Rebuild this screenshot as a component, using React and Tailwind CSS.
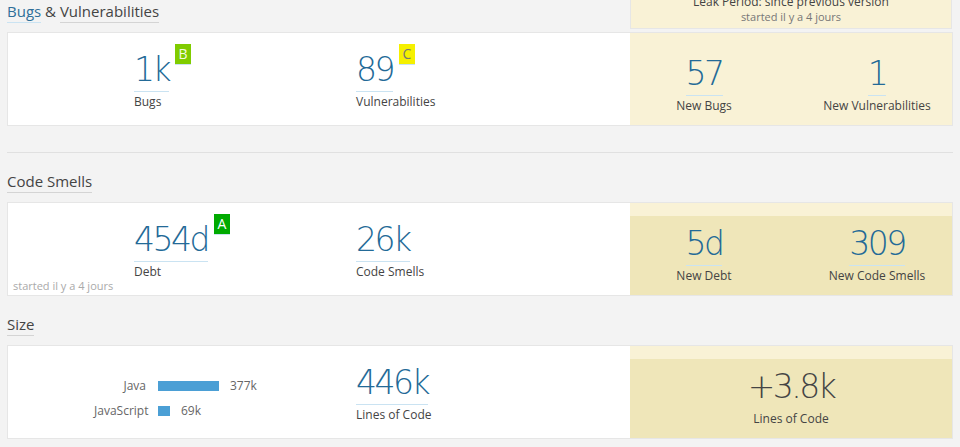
const FONT = { fontFamily: '"Open Sans", "Noto Sans", sans-serif' };
const NUM_FONT = { fontFamily: '"DejaVu Sans", "Open Sans", sans-serif' };

const RATING = {
  A: 'bg-[#00aa00] text-white',
  B: 'bg-[#80cc00] text-[#f4fbe0]',
  C: 'bg-[#f5f000] text-[#777]',
};

function Heading({ children }) {
  return <div className="text-[15px] leading-[20px] text-[#444]">{children}</div>;
}

function Link({ children, blue, line = 'border-[#d4d4d4]' }) {
  return (
    <span className={`inline-block pb-[1px] border-b ${line} ${blue ? 'text-[#2f6f99]' : ''}`}>{children}</span>
  );
}

function Badge({ r }) {
  return (
    <span className={`ml-[6px] w-4 h-[21px] border-b border-[#cae3f2] text-[14px] leading-[20px] text-center ${RATING[r]}`}>
      {r}
    </span>
  );
}

function Measure({ value, label, rating, center, plain }) {
  return (
    <div className={`flex flex-col ${center ? 'items-center' : 'items-start'}`}>
      <div className="flex items-start">
        <span
          style={NUM_FONT}
          className={`inline-block mt-[6px] pb-[1px] border-b text-[33px] leading-[40px] font-extralight tracking-[-2.5px] ${
            plain ? 'border-transparent text-[#444]' : 'border-[#cae3f2] text-[#236a97]'
          }`}
        >
          {value}
        </span>
        {rating && <Badge r={rating} />}
      </div>
      <span className="text-[12px] leading-[20px] text-[#444]">{label}</span>
    </div>
  );
}

function Card({ left, leak, dark }) {
  return (
    <div className="flex h-[94px] border border-[#e6e6e6] bg-white">
      <div className="flex flex-1">{left}</div>
      <div className={`w-[322px] flex flex-col ${dark ? 'bg-[#efe6b9]' : 'bg-[#f9f2d6]'}`}>
        {dark && <div className="h-[13px] bg-[#f9f2d6]" />}
        {leak}
      </div>
    </div>
  );
}

function LeakPair({ a, b, dark }) {
  return (
    <div className={`flex ${dark ? 'pt-[2px]' : 'pt-[15px]'}`}>
      <div className="w-[148px]">
        <Measure center {...a} />
      </div>
      <div className="ml-[24px] w-[150px]">
        <Measure center {...b} />
      </div>
    </div>
  );
}

const LANGS = [
  { name: 'Java', w: 61, v: '377k' },
  { name: 'JavaScript', w: 12, v: '69k' },
];

export default function App() {
  return (
    <div className="min-h-screen bg-[#f3f3f3] px-[7px] overflow-hidden" style={FONT}>
      {/* bugs & vulnerabilities */}
      <div className="flex items-start justify-between mt-[-5px]">
        <div className="mt-[6px]">
          <Heading>
            <Link blue line="border-[#cae3f2]">Bugs</Link> &amp; <Link>Vulnerabilities</Link>
          </Heading>
        </div>
        <div className="w-[322px] mr-[1px] border-x border-b border-[#e6e6e6] bg-[#f9f2d6] pb-[3px] text-center">
          <div className="text-[12px] leading-[14px] text-[#444]">Leak Period: since previous version</div>
          <div className="text-[11px] leading-[16px] text-[#777]">started il y a 4 jours</div>
        </div>
      </div>
      <div className="mt-[3px]">
        <Card
          left={
            <>
              <div className="w-[126px]" />
              <div className="w-[222px] pt-[11px]">
                <Measure value="1k" label="Bugs" rating="B" />
              </div>
              <div className="flex-1 pt-[11px]">
                <Measure value="89" label="Vulnerabilities" rating="C" />
              </div>
            </>
          }
          leak={<LeakPair a={{ value: '57', label: 'New Bugs' }} b={{ value: '1', label: 'New Vulnerabilities' }} />}
        />
      </div>

      <div className="mt-[26px] h-px bg-[#e0e0e0]" />

      {/* code smells */}
      <div className="mt-[18px]">
        <Heading>
          <Link>Code Smells</Link>
        </Heading>
      </div>
      <div className="mt-[9px]">
        <Card
          dark
          left={
            <>
              <div className="w-[126px] flex flex-col justify-end pl-[5px] pb-[1px]">
                <span className="text-[11px] leading-[16px] text-[#aaa] whitespace-nowrap">started il y a 4 jours</span>
              </div>
              <div className="w-[222px] pt-[11px]">
                <Measure value="454d" label="Debt" rating="A" />
              </div>
              <div className="flex-1 pt-[11px]">
                <Measure value="26k" label="Code Smells" />
              </div>
            </>
          }
          leak={
            <LeakPair dark a={{ value: '5d', label: 'New Debt' }} b={{ value: '309', label: 'New Code Smells' }} />
          }
        />
      </div>

      {/* size */}
      <div className="mt-[18px]">
        <Heading>
          <Link>Size</Link>
        </Heading>
      </div>
      <div className="mt-[9px]">
        <Card
          dark
          left={
            <>
              <div className="w-[348px] pl-[86px] pt-[27px]">
                {LANGS.map((l) => (
                  <div key={l.name} className="flex items-center h-[25px] text-[12px] text-[#666]">
                    <span className="w-[52px] text-right">{l.name}</span>
                    <span className="ml-[12px] h-[10px] bg-[#4b9fd5]" style={{ width: l.w }} />
                    <span className="ml-[11px]">{l.v}</span>
                  </div>
                ))}
              </div>
              <div className="flex-1 pt-[11px]">
                <Measure value="446k" label="Lines of Code" />
              </div>
            </>
          }
          leak={
            <div className="pt-[2px]">
              <Measure center plain value="+3.8k" label="Lines of Code" />
            </div>
          }
        />
      </div>
    </div>
  );
}
